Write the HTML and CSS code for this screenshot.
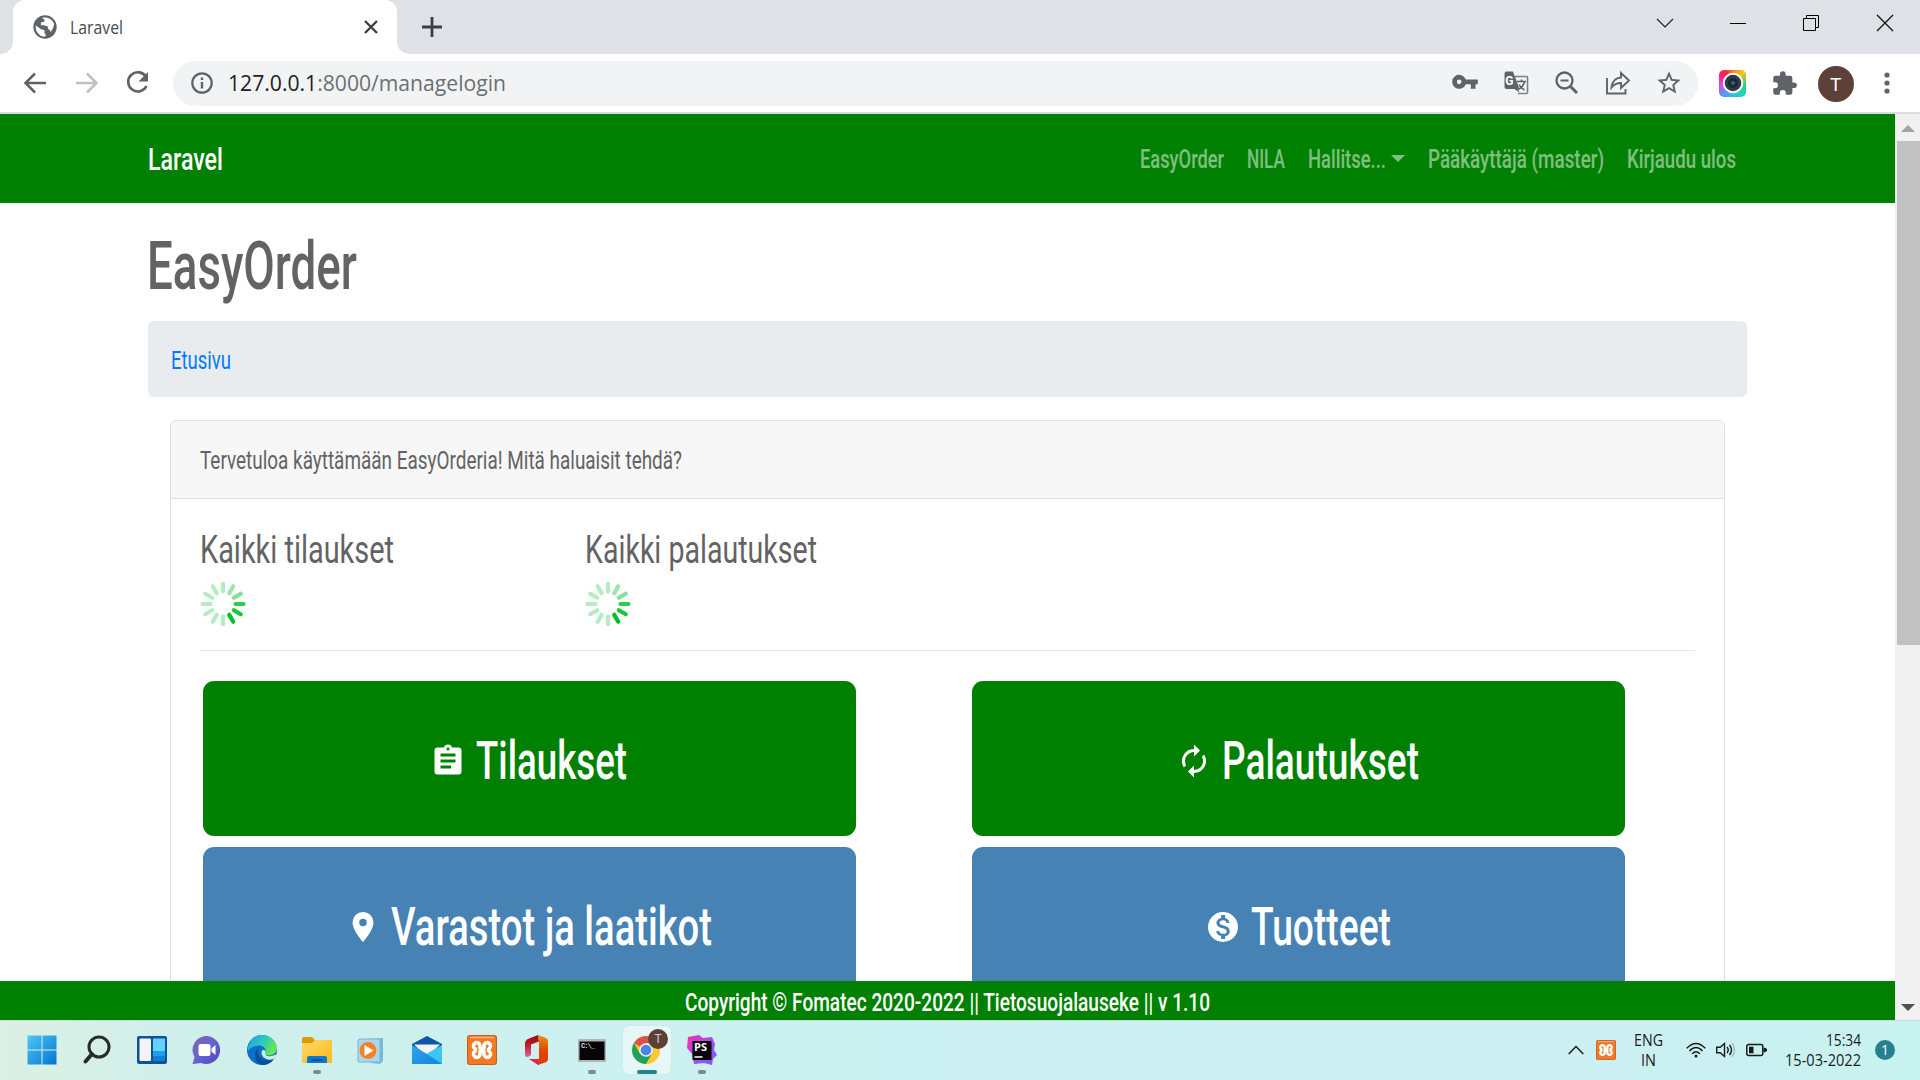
FILE: index.html
```html
<!DOCTYPE html>
<html lang="fi">
<head>
<meta charset="utf-8">
<title>Laravel</title>
<link rel="stylesheet" href="styles.css">
</head>
<body>
<svg width="0" height="0" class="defs" aria-hidden="true">
  <defs>
    <g id="spinner" stroke-width="4.2" stroke-linecap="round" stroke="#b5edc2">
      <path d="M23 2.5v8" /><path d="M23 2.5v8" stroke="#9de7ae" transform="rotate(30 23 23)"/>
      <path d="M23 2.5v8" stroke="#85e098" transform="rotate(60 23 23)"/>
      <path d="M23 2.5v8" stroke="#2fcb50" transform="rotate(90 23 23)"/>
      <path d="M23 2.5v8" stroke="#19c63d" transform="rotate(120 23 23)"/>
      <path d="M23 2.5v8" stroke="#00c02a" transform="rotate(150 23 23)"/>
      <path d="M23 2.5v8" transform="rotate(180 23 23)"/><path d="M23 2.5v8" transform="rotate(210 23 23)"/>
      <path d="M23 2.5v8" transform="rotate(240 23 23)"/><path d="M23 2.5v8" transform="rotate(270 23 23)"/>
      <path d="M23 2.5v8" transform="rotate(300 23 23)"/><path d="M23 2.5v8" transform="rotate(330 23 23)"/>
    </g>
    <g id="xampp">
      <rect width="30" height="30" rx="3" fill="#c95d1c"/><rect x="1" y="1" width="28" height="28" rx="2.500" fill="#f27a24"/>
      <path d="M3 2.500h24" stroke="#f9b27c" stroke-width="1.500"/>
      <g fill="none" stroke="#fff" stroke-width="3.600" stroke-linejoin="round" stroke-linecap="round">
        <path d="M13 13.500V10.500a3.300 3.300 0 1 0-5 3.300q1 .9 0 2.400a3.300 3.300 0 1 0 5 3.300V16.500h4v3a3.300 3.300 0 1 0 5-3.300q-1-1.500 0-2.400a3.300 3.300 0 1 0-5-3.300v3z"/>
      </g>
    </g>
    <linearGradient id="gWin" x1="0" y1="0" x2="1" y2="1"><stop offset="0" stop-color="#4cc8f8"/><stop offset="1" stop-color="#0573d0"/></linearGradient>
    <linearGradient id="gChat" x1="0" y1="0" x2="1" y2="1"><stop offset="0" stop-color="#8a63a8"/><stop offset=".5" stop-color="#6264d2"/><stop offset="1" stop-color="#5045bd"/></linearGradient>
    <linearGradient id="gEdge" x1="0" y1="0" x2="1" y2=".5"><stop offset="0" stop-color="#1e9fe8"/><stop offset=".5" stop-color="#2cc6c6"/><stop offset="1" stop-color="#6be44f"/></linearGradient>
    <linearGradient id="gFold" x1="0" y1="0" x2="1" y2="1"><stop offset="0" stop-color="#ffd968"/><stop offset="1" stop-color="#fbb81a"/></linearGradient>
    <linearGradient id="gMail" x1="0" y1="0" x2="1" y2="1"><stop offset="0" stop-color="#2ea6ec"/><stop offset="1" stop-color="#1583dc"/></linearGradient>
    <linearGradient id="gOff" x1="0" y1="0" x2="0" y2="1"><stop offset="0" stop-color="#f09010"/><stop offset=".5" stop-color="#e04a04"/><stop offset="1" stop-color="#d83b01"/></linearGradient>
    <linearGradient id="gOffL" x1="0" y1="0" x2="0" y2="1"><stop offset="0" stop-color="#900a10"/><stop offset=".5" stop-color="#c8202c"/><stop offset="1" stop-color="#d4679d"/></linearGradient>
    <linearGradient id="gPs" x1="0" y1="0" x2="1" y2="1"><stop offset="0" stop-color="#ff2fa0"/><stop offset=".5" stop-color="#a44bf2"/><stop offset="1" stop-color="#7a5cff"/></linearGradient>
  </defs>
</svg>

<div class="tabstrip">
  <div class="tab">
    <svg class="favicon" width="28" height="28" viewBox="0 0 24 24"><circle cx="12" cy="12" r="10" fill="#5f6368"/><path d="M4 10.500l4.500 3.500 3 .5v2.500l1.500 2.500-2 .8C6.500 19.500 3.800 16 4 10.500zM9.500 4.300c4-1.300 9 .8 10.300 5.200-.3 3-1.500 5-3 6.800-.5-1.800-1.300-2.300-2.300-2.300v-2.500l-3.500-1H8.500V8l3-.5V5.500z" fill="#fff"/></svg>
    <svg class="ui tab-title" width="53" height="13"><text y="13" textLength="53" lengthAdjust="spacingAndGlyphs">Laravel</text></svg>
    <svg class="tab-close" width="14" height="14"><path d="M1 1l12 12m0-12L1 13" stroke="#3c4043" stroke-width="2.400"/></svg>
  </div>
  <svg class="newtab" width="20" height="20"><path d="M10 0v20M0 10h20" stroke="#3c4043" stroke-width="2.800"/></svg>
  <div class="win-controls">
    <svg width="18" height="18"><path d="M1 5l8 8 8-8" fill="none" stroke="#222" stroke-width="1.200"/></svg>
    <svg width="18" height="18"><path d="M1 9.500h16" stroke="#000"/></svg>
    <svg width="18" height="18"><path d="M.5 4.500h12v12h-12zM3.500 4V1.500h12v12H13" fill="none" stroke="#000"/></svg>
    <svg width="18" height="18"><path d="M1 1l16 16m0-16L1 17" stroke="#111" stroke-width="1.300"/></svg>
  </div>
</div>

<div class="toolbar">
  <div class="nav-buttons">
    <svg width="24" height="24"><path d="M23 12H3m9-9.500L2.500 12l9.500 9.500" fill="none" stroke="#5f6368" stroke-width="2.500"/></svg>
    <svg width="24" height="24"><path d="M1 12h20M12 2.500l9.500 9.500-9.500 9.500" fill="none" stroke="#bdc1c6" stroke-width="2.500"/></svg>
    <svg width="24" height="24"><path d="M20 5.800A9.600 9.600 0 1 0 20.500 15" fill="none" stroke="#5f6368" stroke-width="2.600"/><path d="M22 1v9.500h-9.500z" fill="#5f6368"/></svg>
  </div>
  <div class="omnibox">
    <svg width="28" height="28" viewBox="0 0 28 28"><circle cx="14" cy="14" r="9.700" fill="none" stroke="#5f6368" stroke-width="2.200"/><path d="M14 13v6.500M14 8.500v2.500" stroke="#5f6368" stroke-width="2.400"/></svg>
    <svg class="ui url" width="278" height="16"><text y="16" textLength="278" lengthAdjust="spacingAndGlyphs"><tspan class="host">127.0.0.1</tspan>:8000/managelogin</text></svg>
    <div class="omni-icons">
      <svg width="28" height="28" viewBox="0 0 24 24"><path d="M12.650 9A6 6 0 1 0 12.650 13H17v4h4v-4h2V9zM7 13a2 2 0 1 1 0-4 2 2 0 0 1 0 4z" fill="#5f6368"/></svg>
      <svg width="28" height="28" viewBox="0 0 28 28"><path d="M13 7.500h11.500q1 0 1 1v15q0 1-1 1H16" fill="none" stroke="#7d8186" stroke-width="1.600"/><path d="M4.500 2.500H11l6.500 17.500H16l1.500 3.500-5-3.500h-8Q2.500 20 2.500 18V4.500q0-2 2-2z" fill="#5f6368"/><text x="3.300" y="15.500" class="glyph-g">G</text><path d="M15 12.500h9m-4.500-2v2m3 0q-1 5-6 8m.5-5q2 4 5.500 5.500" fill="none" stroke="#5f6368" stroke-width="1.600"/></svg>
      <svg width="28" height="28" viewBox="0 0 28 28"><circle cx="11.500" cy="11.500" r="8" fill="none" stroke="#5f6368" stroke-width="2.300"/><path d="M7.500 11.500h8" stroke="#5f6368" stroke-width="2"/><path d="M17 17l7 7" stroke="#5f6368" stroke-width="3"/></svg>
      <svg width="28" height="28" viewBox="0 0 28 28" fill="none" stroke="#5f6368" stroke-width="1.900"><path d="M3 9v15.500h18.500V20"/><path d="M7.500 18.500Q8.500 9 17 8.500V4l8 7.500-8 7.500v-5Q11 14 7.500 18.500z"/></svg>
      <svg width="28" height="28" viewBox="0 0 24 24"><path d="M22 9.240l-7.190-.62L12 2 9.190 8.630 2 9.240l5.460 4.730L5.820 21 12 17.270 18.180 21l-1.630-7.030zM12 15.400l-3.760 2.270 1-4.280-3.320-2.880 4.380-.38L12 6.100l1.710 4.040 4.380.38-3.320 2.880 1 4.280z" fill="#5f6368"/></svg>
    </div>
  </div>
  <div class="extensions">
    <div class="lens"><svg width="22" height="22"><circle cx="11" cy="11" r="9.300" fill="#2d3c48" stroke="#fff" stroke-width="2"/><circle cx="11" cy="11" r="5" fill="#1b2832"/><circle cx="11" cy="11" r="2" fill="#33617a"/></svg></div>
    <svg width="27" height="27" viewBox="0 0 24 24"><path d="M20.500 11H19V7a2 2 0 0 0-2-2h-4V3.500a2.500 2.500 0 0 0-5 0V5H4a2 2 0 0 0-2 2v3.800h1.500a2.700 2.700 0 0 1 0 5.400H2V20a2 2 0 0 0 2 2h3.800v-1.500a2.700 2.700 0 0 1 5.400 0V22H17a2 2 0 0 0 2-2v-4h1.500a2.500 2.500 0 0 0 0-5z" fill="#5f6368"/></svg>
    <div class="avatar">T</div>
    <svg width="6" height="24"><g fill="#5f6368"><circle cx="3" cy="4" r="2.600"/><circle cx="3" cy="12" r="2.600"/><circle cx="3" cy="20" r="2.600"/></g></svg>
  </div>
</div>

<div class="viewport">
  <div class="page">
    <nav class="navbar">
      <svg class="cond brand" width="75" height="23"><text y="23" textLength="75" lengthAdjust="spacingAndGlyphs">Laravel</text></svg>
      <div class="nav-links">
        <svg class="cond body-text" width="84" height="19"><text y="19" textLength="120" lengthAdjust="spacingAndGlyphs">EasyOrder</text></svg>
        <svg class="cond body-text" width="38" height="19"><text y="19" textLength="54.300" lengthAdjust="spacingAndGlyphs">NILA</text></svg>
        <div class="dropdown">
          <svg class="cond body-text" width="78" height="19"><text y="19" textLength="111.400" lengthAdjust="spacingAndGlyphs">Hallitse...</text></svg>
          <span class="caret"></span>
        </div>
        <svg class="cond body-text" width="176" height="19"><text y="19" textLength="251.400" lengthAdjust="spacingAndGlyphs">Pääkäyttäjä (master)</text></svg>
        <svg class="cond body-text" width="109" height="19"><text y="19" textLength="155.700" lengthAdjust="spacingAndGlyphs">Kirjaudu ulos</text></svg>
      </div>
    </nav>

    <main class="content">
      <h1><svg class="cond title" width="210" height="47"><text y="47" textLength="210" lengthAdjust="spacingAndGlyphs">EasyOrder</text></svg></h1>
      <div class="breadcrumb">
        <svg class="cond body-text" width="60" height="19"><text y="19" textLength="60" lengthAdjust="spacingAndGlyphs">Etusivu</text></svg>
      </div>
      <section class="card">
        <header class="card-header">
          <svg class="cond body-text" width="482" height="19"><text y="19" textLength="482" lengthAdjust="spacingAndGlyphs">Tervetuloa käyttämään EasyOrderia! Mitä haluaisit tehdä?</text></svg>
        </header>
        <div class="card-body">
          <div class="stats">
            <div class="stat">
              <svg class="cond heading" width="194" height="28"><text y="28" textLength="194" lengthAdjust="spacingAndGlyphs">Kaikki tilaukset</text></svg>
              <svg width="46" height="46"><use href="#spinner"/></svg>
            </div>
            <div class="stat">
              <svg class="cond heading" width="232" height="28"><text y="28" textLength="232" lengthAdjust="spacingAndGlyphs">Kaikki palautukset</text></svg>
              <svg width="46" height="46"><use href="#spinner"/></svg>
            </div>
          </div>
          <div class="tiles">
            <a class="tile green">
              <svg class="tile-icon" width="36" height="36" viewBox="0 0 24 24"><path fill="#fff" d="M19 3h-4.180a3 3 0 0 0-5.640 0H5a2 2 0 0 0-2 2v14a2 2 0 0 0 2 2h14a2 2 0 0 0 2-2V5a2 2 0 0 0-2-2zm-7 0a1 1 0 1 1 0 2 1 1 0 0 1 0-2zm2 14H7v-2h7zm3-4H7v-2h10zm0-4H7V7h10z"/></svg>
              <svg class="cond tile-text" width="151" height="38"><text y="38" textLength="151" lengthAdjust="spacingAndGlyphs">Tilaukset</text></svg>
            </a>
            <a class="tile green">
              <svg class="tile-icon" width="36" height="36" viewBox="0 0 24 24"><path fill="#fff" d="M12 6v3l4-4-4-4v3a8 8 0 0 0-6.760 12.260L6.700 14.800A6 6 0 0 1 12 6zm6.760 1.740L17.300 9.200A6 6 0 0 1 12 18v-3l-4 4 4 4v-3a8 8 0 0 0 6.760-12.260z"/></svg>
              <svg class="cond tile-text" width="197" height="38"><text y="38" textLength="197" lengthAdjust="spacingAndGlyphs">Palautukset</text></svg>
            </a>
            <a class="tile blue">
              <svg class="tile-icon" width="36" height="36" viewBox="0 0 24 24"><path fill="#fff" d="M12 2a7 7 0 0 0-7 7c0 5.250 7 13 7 13s7-7.750 7-13a7 7 0 0 0-7-7zm0 9.500a2.500 2.500 0 1 1 0-5 2.500 2.500 0 0 1 0 5z"/></svg>
              <svg class="cond tile-text" width="321" height="38"><text y="38" textLength="321" lengthAdjust="spacingAndGlyphs">Varastot ja laatikot</text></svg>
            </a>
            <a class="tile blue">
              <svg class="tile-icon" width="36" height="36" viewBox="0 0 24 24"><path fill="#fff" d="M12 2a10 10 0 1 0 0 20 10 10 0 0 0 0-20zm1.410 16.090V20h-2.670v-1.930c-1.710-.36-3.160-1.460-3.270-3.400h1.960c.1 1.050.82 1.870 2.650 1.870 1.960 0 2.400-.98 2.400-1.590 0-.83-.44-1.610-2.670-2.140-2.480-.6-4.180-1.620-4.180-3.670 0-1.720 1.390-2.840 3.110-3.210V4h2.670v1.950c1.860.45 2.790 1.860 2.850 3.390H14.300c-.05-1.110-.64-1.870-2.220-1.870-1.500 0-2.400.68-2.400 1.640 0 .84.65 1.390 2.670 1.910s4.180 1.390 4.180 3.910c-.01 1.830-1.380 2.830-3.120 3.160z"/></svg>
              <svg class="cond tile-text" width="140" height="38"><text y="38" textLength="140" lengthAdjust="spacingAndGlyphs">Tuotteet</text></svg>
            </a>
          </div>
        </div>
      </section>
    </main>

    <footer class="footer">
      <svg class="cond body-text" width="525" height="19"><text y="19" textLength="525" lengthAdjust="spacingAndGlyphs">Copyright © Fomatec 2020-2022 || Tietosuojalauseke || v 1.10</text></svg>
    </footer>
  </div>
  <div class="scrollbar">
    <svg width="14" height="7"><path d="M0 7l7-7 7 7z" fill="#a3a3a3"/></svg>
    <div class="thumb"></div>
    <svg width="14" height="7"><path d="M0 0l7 7 7-7z" fill="#505050"/></svg>
  </div>
</div>

<div class="taskbar">
  <div class="apps">
    <div class="app"><svg width="30" height="30"><path d="M.5.500h14v14H.5zM15.500.500h14v14h-14zM.5 15.500h14v14H.5zM15.500 15.500h14v14h-14z" fill="url(#gWin)"/></svg></div>
    <div class="app"><svg width="30" height="30"><circle cx="17" cy="12" r="10" fill="none" stroke="#2b2b2b" stroke-width="3"/><path d="M10 19l-6.500 7.500" stroke="#2b2b2b" stroke-width="4" stroke-linecap="round"/></svg></div>
    <div class="app"><svg width="30" height="30"><rect y="1" width="30" height="28" rx="2" fill="#0e5298"/><rect x="2.500" y="3.500" width="11.500" height="22.500" rx="1" fill="#f4f4f4"/><rect x="16" y="3.500" width="12" height="12.500" fill="#62d2fb"/><rect x="16" y="16" width="12" height="5" fill="#1ba0ee"/><rect x="16" y="21" width="12" height="5" fill="#0f7fd8"/></svg></div>
    <div class="app"><svg width="30" height="30"><path d="M15 1a14 14 0 1 1-6 27L.5 29l2-7A14 14 0 0 1 15 1z" fill="url(#gChat)"/><rect x="6.500" y="9" width="12" height="12" rx="2" fill="#fff"/><path d="M19.500 13.500l4-3.500v10l-4-3.500z" fill="#fff"/></svg></div>
    <div class="app"><svg width="30" height="30"><circle cx="15" cy="15" r="15" fill="#0d6fc8"/><path d="M1 12C3 4 9 0 15 0c9 0 15 7 15 13 0 5-4 7.500-8 7.500-4 0-5-1.500-4-3 2-3-1-7-6-7-4 0-8 2-11 5z" fill="url(#gEdge)"/><path d="M12 13c-4 8 4 15 15 11-3 4-7 6-11 6C8 30 5 17 12 13z" fill="#0b4e9c"/><path d="M29.500 14c1 6-7 8-11 5.500-1.500-1-.5-1.800 0-3-3-1.500-4.500 1-4 3.500 1 4 8 5.500 13 3l3.500-3z" fill="#ccefee" opacity="0"/><path d="M15 15.500q3-1.500 3.500 1.500c-2 4.500 5 5.500 10 2.500l1 2-3 2.500c-6 2.500-14-2.500-11.500-8.500z" fill="#ccefee"/></svg></div>
    <div class="app open"><svg width="30" height="30"><path d="M0 4q0-2 2-2h8l3 3h15q2 0 2 2v4H0z" fill="#dd9a08"/><path d="M0 8h10l3-3h17v23H0z" fill="url(#gFold)"/><path d="M5 28v-5q0-2 2-2h16q2 0 2 2v5z" fill="#0f78cc"/><path d="M9 25h12" stroke="#0a4d8c" stroke-width="1.500"/></svg></div>
    <div class="app"><svg width="30" height="30"><path d="M8 4l18-1v23l-3 3-9-1z" fill="#74b9dc"/><path d="M6 4h17v23H6q-5 1-5-1V6q0-2 2-2z" fill="#a9d7ea" stroke="#79b7d2"/><circle cx="11" cy="15.500" r="8.500" fill="#f58025"/><path d="M7.500 10l9 5.500-9 5.500z" fill="#fff"/></svg></div>
    <div class="app"><svg width="30" height="30"><path d="M0 9l15-8 15 8v8H0z" fill="#0b57a8"/><path d="M2 9.500h26L15 22z" fill="#f2f2f2"/><path d="M0 10l15 9 15-9v19H0z" fill="url(#gMail)"/><path d="M30 10v19L15 19z" fill="#3cc6f3"/></svg></div>
    <div class="app"><svg width="30" height="30"><use href="#xampp"/></svg></div>
    <div class="app"><svg width="30" height="30"><path d="M16 0L6 4Q3 5.500 3 8.500v11q0 3 3 2.500l3-2V9.500l8-3z" fill="url(#gOffL)"/><path d="M16 0l7 2.500q3 1 3 4v17q0 3-3 4L16 30l1-5V6z" fill="url(#gOff)"/><path d="M7 24l10 0v6h-1z" fill="#e0274b"/></svg></div>
    <div class="app open"><svg width="30" height="30"><rect x="1" y="4" width="28" height="23" fill="#b0b6b6"/><rect x="2.500" y="6.500" width="25" height="18.500" fill="#060606"/><text x="4" y="12.500" textLength="14" class="prompt">C:\_</text></svg></div>
    <div class="app active"><svg width="36" height="36" viewBox="0 0 36 36"><circle cx="17" cy="18" r="14" fill="#fbc02d"/><path d="M17 18L4.900 11A14 14 0 0 1 29.100 11z" fill="#d9534a"/><path d="M17 18V11h12.100A14 14 0 0 1 17 32l6-10.500z" fill="#fcc934"/><path d="M4.900 11A14 14 0 0 0 17 32l6-10.500-12 0z" fill="#1fa15d"/><circle cx="17" cy="18" r="6.800" fill="#f3f6f6"/><circle cx="17" cy="18" r="5.300" fill="#4a86e8"/></svg><span class="mini-avatar">T</span></div>
    <div class="app open"><svg width="30" height="30"><path d="M1 2l11-2 4 3 9-1 3 7-1 6 3 5-4 4-1 6-8-2-10 1-2-10-5-6z" fill="url(#gPs)"/><rect x="5.500" y="6" width="19" height="19" fill="#050505"/><text x="7" y="15.500" class="ps">PS</text><path d="M7.500 22h8" stroke="#fff" stroke-width="1.500"/></svg></div>
  </div>
  <div class="tray">
    <svg width="16" height="10"><path d="M.7 9L8 1.500 15.300 9" fill="none" stroke="#1b1b1b" stroke-width="1.500"/></svg>
    <svg class="tray-xampp" width="20" height="20" viewBox="0 0 30 30"><use href="#xampp"/></svg>
    <div class="lang">
      <svg class="ui small" width="29" height="11"><text y="11" textLength="29" lengthAdjust="spacingAndGlyphs">ENG</text></svg>
      <svg class="ui small" width="15" height="11"><text y="11" textLength="15" lengthAdjust="spacingAndGlyphs">IN</text></svg>
    </div>
    <svg class="wifi" width="20" height="16" fill="none" stroke="#1b1b1b" stroke-width="1.500"><path d="M.7 6.300Q10-3.500 19.300 6.300M3.500 9Q10 2 16.500 9M6.200 11.700q3.800-4 7.600 0"/><circle cx="10" cy="14" r="1.500" fill="#1b1b1b" stroke="none"/></svg>
    <svg class="speaker" width="20" height="16" fill="none" stroke="#1b1b1b" stroke-width="1.400"><path d="M.7 5.300h3.500L8.500 1.500v13L4.200 10.700H.7zM11 5q2.500 3 0 6M13.500 3q4 5 0 10"/><path d="M16 1q5 7 0 14" stroke="#a3bcbc"/></svg>
    <svg class="battery" width="21" height="14"><rect x=".8" y="1.500" width="16" height="11" rx="2" fill="none" stroke="#1b1b1b" stroke-width="1.500"/><rect x="3" y="3.700" width="4.500" height="6.600" fill="#1b1b1b"/><path d="M18 5l2.500 1v2L18 9z" fill="#1b1b1b" stroke="#1b1b1b"/></svg>
    <div class="clock">
      <svg class="ui small" width="35" height="11"><text y="11" textLength="35" lengthAdjust="spacingAndGlyphs">15:34</text></svg>
      <svg class="ui small" width="76" height="11"><text y="11" textLength="76" lengthAdjust="spacingAndGlyphs">15-03-2022</text></svg>
    </div>
    <span class="notice">1</span>
  </div>
</div>
</body>
</html>
```
FILE: styles.css
```css
* { box-sizing: border-box; }
body {
  margin: 0;
  width: 1920px;
  height: 1080px;
  overflow: hidden;
  display: flex;
  flex-direction: column;
  background: #fff;
  font-family: "Open Sans", "Noto Sans", sans-serif;
}
svg { display: block; flex: none; overflow: visible; }
.defs { position: absolute; }

/* Condensed display type */
.cond { font-family: Roboto, "Liberation Sans", sans-serif; font-weight: 500; }
.cond text { fill: currentColor; }
.body-text { font-size: 26.5px; font-weight: 400; }
.brand { font-size: 32px; color: #fff; }
.title { font-size: 66px; }
.heading { font-size: 39.5px; font-weight: 400; }
.tile-text { font-size: 53.5px; }

/* Interface type */
.ui text { fill: currentColor; }
.tab-title { font-size: 18px; color: #45494d; }
.url { font-size: 22.5px; color: #6b6f73; }
.host { fill: #202124; }
.small { font-size: 15.5px; color: #1b1b1b; }
.glyph-g { font: bold 12px Roboto, sans-serif; fill: #fff; }
.prompt { font: bold 7px "Liberation Mono", monospace; fill: #ddd; }
.ps { font: bold 11px "Open Sans", sans-serif; fill: #fff; }

/* Tab strip */
.tabstrip { height: 54px; background: #dee1e6; display: flex; align-items: center; padding-left: 13px; }
.tab {
  position: relative;
  width: 384px;
  height: 54px;
  background: #fff;
  border-radius: 12px 12px 0 0;
  display: flex;
  align-items: center;
  padding: 0 19px 0 18px;
}
.tab::before, .tab::after {
  content: "";
  position: absolute;
  bottom: 0;
  width: 12px;
  height: 12px;
}
.tab::before { left: -12px; background: radial-gradient(circle at 0 0, #dee1e6 11.5px, #fff 12px); }
.tab::after { right: -12px; background: radial-gradient(circle at 100% 0, #dee1e6 11.5px, #fff 12px); }
.tab-title { margin-left: 11px; }
.tab-close { margin-left: auto; }
.newtab { margin-left: 25px; }
.win-controls { margin-left: auto; margin-right: 26px; margin-bottom: 8px; display: flex; gap: 55.500px; }

/* Toolbar */
.toolbar { height: 60px; border-bottom: 2px solid #dadce0; display: flex; align-items: center; padding-left: 23px; }
.nav-buttons { display: flex; gap: 27.500px; width: 150px; }
.omnibox { width: 1525px; height: 45px; border-radius: 23px; background: #f1f3f4; display: flex; align-items: center; padding: 0 15px; }
.url { margin-left: 12px; }
.omni-icons { margin-left: auto; display: flex; gap: 23px; }
.extensions { flex: 1; padding: 0 7px 0 9px; display: grid; grid-template-columns: repeat(4, 1fr); place-items: center; }
.lens {
  width: 27px; height: 27px; border-radius: 5px;
  display: grid; place-items: center;
  background: conic-gradient(#f5811f, #f5c518 45deg, #2fd07a 90deg, #1fd3c4 150deg, #4ba0ff 210deg, #d050f0 260deg, #ff1e8c 300deg, #f02a3c 330deg, #f5811f);
}
.avatar { width: 36px; height: 36px; margin-top: 1px; border-radius: 50%; background: #5d4037; color: #fff; font: 19px/37px Roboto, sans-serif; text-align: center; }

/* Viewport */
.viewport { height: 906px; display: flex; }
.page { width: 1895px; display: flex; flex-direction: column; color: #636363; }
.scrollbar { width: 25px; background: #f1f1f1; display: flex; flex-direction: column; align-items: center; padding: 11px 0 9px; }
.scrollbar .thumb { width: 23px; height: 504px; margin: 9px 0 auto 2px; background: #c1c1c1; }

.navbar { height: 89px; flex: none; background: green; display: flex; align-items: center; justify-content: space-between; padding: 0 159px 0 148px; }
.nav-links { display: flex; gap: 23px; color: rgba(255, 255, 255, .5); }
.nav-links .body-text { font-weight: 500; }
.nav-links text { transform: scaleX(.7); }
.dropdown { display: flex; align-items: center; gap: 5px; }
.caret { border: 7px solid transparent; border-top-color: currentColor; border-bottom: 0; }

.content { flex: 1; min-height: 0; overflow: hidden; padding: 39px 148px 0; }
h1 { margin: 0 0 32px -1px; }
.breadcrumb { height: 76px; border-radius: 6px; background: #e9ecef; color: #007bff; display: flex; align-items: center; padding-left: 23px; }
.card { margin: 23px 22px 0; height: 700px; border: 1px solid #dfdfdf; border-radius: 6px; }
.card-header { height: 78px; background: #f7f7f7; border-bottom: 1px solid #dfdfdf; border-radius: 5px 5px 0 0; display: flex; align-items: center; padding-left: 29px; }
.card-body { padding: 36px 29px 0; }
.stats { display: flex; height: 116px; border-bottom: 1px solid #e5e5e5; }
.stat { width: 384.500px; display: flex; flex-direction: column; gap: 18px; }
.tiles { display: grid; grid-template-columns: 653px 653px; column-gap: 116px; row-gap: 11px; padding: 30px 3px 0; }
.tile { height: 155px; border-radius: 11px; color: #fff; display: flex; align-items: center; justify-content: center; gap: 10px; padding-right: 2px; }
.tile-icon { margin-top: 4px; }
.tile .tile-text { margin-top: 2px; }
.green { background: green; }
.blue { background: steelblue; }

.footer { height: 39px; flex: none; background: green; color: #fff; display: flex; align-items: center; justify-content: center; padding-top: 2px; }
.footer .body-text { font-weight: 500; }

/* Taskbar */
.taskbar { height: 60px; display: flex; justify-content: space-between; background: linear-gradient(90deg, #dcf0e3, #d0efeb 180px, #cbf1f0 600px, #cdeff3 1500px, #c8f2f0); border-top: 1px solid #c5dfdc; }
.apps { display: flex; gap: 7px; padding: 5px 0 0 18px; }
.app { position: relative; width: 48px; height: 48px; display: grid; place-items: center; border-radius: 5px; }
.open::after, .active::after { content: ""; position: absolute; bottom: 0; left: 20px; width: 8px; height: 4px; border-radius: 2px; background: #7b8b8b; }
.active { background: #e6f7f7; box-shadow: 0 0 1px #a9c9c9; }
.active::after { left: 14px; width: 20px; background: #26818f; }
.mini-avatar { position: absolute; left: 25px; top: 3px; width: 20px; height: 20px; border-radius: 50%; background: #5d4037; color: #d8cfcc; font: 12px/20px Roboto, sans-serif; text-align: center; }
.tray { display: flex; align-items: center; padding-right: 25px; height: 58px; }
.tray-xampp { margin-left: 12px; }
.lang { display: flex; flex-direction: column; align-items: center; gap: 9px; margin-left: 18px; }
.wifi { margin-left: 23px; }
.speaker { margin-left: 10px; }
.battery { margin-left: 10px; }
.clock { display: flex; flex-direction: column; align-items: flex-end; gap: 9px; margin-left: 18px; }
.notice { width: 20px; height: 20px; margin-left: 14px; border-radius: 50%; background: #26818f; color: #fff; font-size: 14px; line-height: 20px; text-align: center; }
```
